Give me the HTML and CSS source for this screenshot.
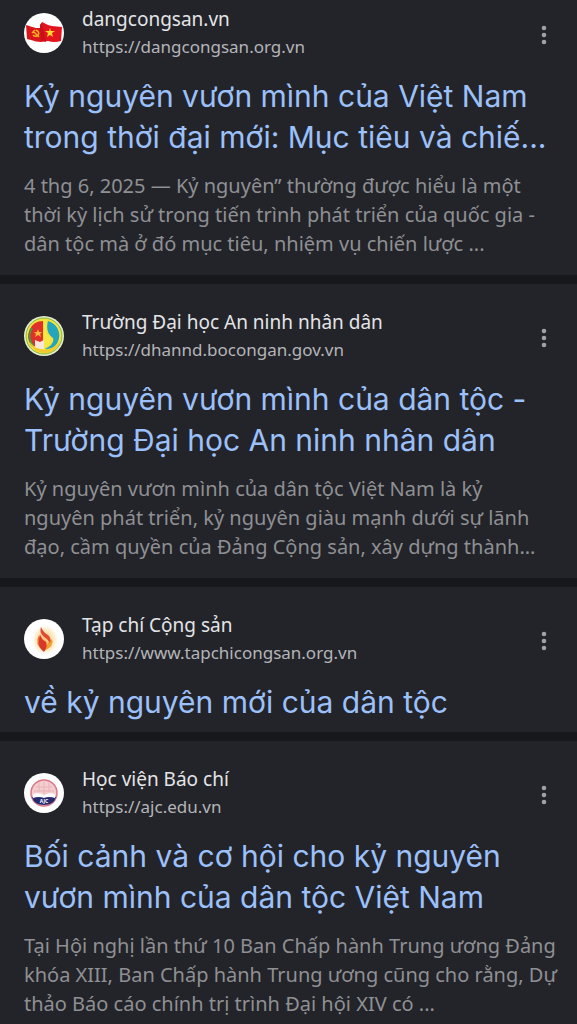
FILE: index.html
```html
<!DOCTYPE html>
<html lang="vi">
<head>
    <meta charset="UTF-8">
    <meta name="viewport" content="width=device-width, initial-scale=1">
    <title>kỷ nguyên vươn mình</title>
    <link rel="stylesheet" href="styles.css">
</head>
<body>
    <main class="results">
        <article class="result">
            <header class="source">
                <svg class="favicon" viewBox="0 0 40 40" aria-hidden="true">
                    <circle cx="20" cy="20" r="20" fill="#fff"/>
                    <path d="M2 12Q8 14 12 15L17 15V29Q12 29 7 27L3 26Z" fill="#d9151c"/>
                    <path d="M16 12L18 9Q23 12 28 13L38 14L37 28Q30 30 24 28L17 29Z" fill="#e3141d"/>
                    <path d="M16 12L17 27L22 29L18 10Z" fill="#c51119"/>
                    <path d="M26 15l1 3h4l-3 2 1 4-3-2-3 2 1-4-3-2h4z" fill="#ffd52e"/>
                    <path d="M12 17q5 3 1 6q-2 1-4-1M9 18l6 6M8 20l3-3" fill="none" stroke="#f8b020" stroke-width="1.5"/>
                </svg>
                <div class="site">
                    <span class="name">dangcongsan.vn</span>
                    <cite class="url">https://dangcongsan.org.vn</cite>
                </div>
                <button class="more" aria-label="Tùy chọn khác">
                    <svg viewBox="0 0 6 20" aria-hidden="true"><circle cx="3" cy="3" r="2.3"/><circle cx="3" cy="10" r="2.3"/><circle cx="3" cy="17" r="2.3"/></svg>
                </button>
            </header>
            <h3 class="title"><a href="#">Kỷ nguyên vươn mình của Việt Nam<br>trong thời đại mới: Mục tiêu và chiế...</a></h3>
            <p class="snippet">4 thg 6, 2025 — Kỷ nguyên” thường được hiểu là một<br>thời kỳ lịch sử trong tiến trình phát triển của quốc gia -<br>dân tộc mà ở đó mục tiêu, nhiệm vụ chiến lược ...</p>
        </article>

        <article class="result">
            <header class="source">
                <svg class="favicon" viewBox="0 0 40 40" aria-hidden="true">
                    <circle cx="20" cy="20" r="20" fill="#e8efcf"/>
                    <circle cx="20" cy="20" r="18" fill="#f3e23c" stroke="#7fb84d" stroke-width="1"/>
                    <path d="M19 5A15 15 0 0 0 8 30L19 31Z" fill="#e0302a"/>
                    <path d="M8 12A15 15 0 0 0 9 30" fill="none" stroke="#3f9a4b" stroke-width="2"/>
                    <path d="M24 5A15 15 0 0 1 31 30Q26 34 21 33Q31 28 29 22Q21 17 24 5Z" fill="#23a6bd"/>
                    <path d="M20 4h2v13l4 4q2 7-4 10h-2z" fill="#f7e747"/>
                    <path d="M5 25Q10 38 22 37Q33 35 36 25Q29 34 20 34Q11 33 5 25Z" fill="#f2c92e"/>
                    <path d="M14 13l1 3h3l-2 2 1 3-3-2-3 2 1-3-2-2h3z" fill="#ffb83b"/>
                    <path d="M11 24l5 2 4-2v9q-6 0-9-2z" fill="#f7e6dc"/>
                </svg>
                <div class="site">
                    <span class="name">Trường Đại học An ninh nhân dân</span>
                    <cite class="url">https://dhannd.bocongan.gov.vn</cite>
                </div>
                <button class="more" aria-label="Tùy chọn khác">
                    <svg viewBox="0 0 6 20" aria-hidden="true"><circle cx="3" cy="3" r="2.3"/><circle cx="3" cy="10" r="2.3"/><circle cx="3" cy="17" r="2.3"/></svg>
                </button>
            </header>
            <h3 class="title"><a href="#">Kỷ nguyên vươn mình của dân tộc -<br>Trường Đại học An ninh nhân dân</a></h3>
            <p class="snippet">Kỷ nguyên vươn mình của dân tộc Việt Nam là kỷ<br>nguyên phát triển, kỷ nguyên giàu mạnh dưới sự lãnh<br>đạo, cầm quyền của Đảng Cộng sản, xây dựng thành...</p>
        </article>

        <article class="result">
            <header class="source">
                <svg class="favicon" viewBox="0 0 40 40" aria-hidden="true">
                    <defs>
                        <radialGradient id="glow">
                            <stop offset="0" stop-color="#f9b04a"/>
                            <stop offset="0.5" stop-color="#fde0a8"/>
                            <stop offset="1" stop-color="#fff"/>
                        </radialGradient>
                    </defs>
                    <circle cx="20" cy="20" r="20" fill="#fff"/>
                    <ellipse cx="21" cy="21" rx="13" ry="15" fill="url(#glow)"/>
                    <path d="M15 16Q10 25 19 32Q19 26 15 16Z" fill="#e9762c"/>
                    <path d="M28 20Q31 27 20 32Q21 26 28 20Z" fill="#f3a12e"/>
                    <path d="M16 15Q17 20 22 23Q24 27 20 33Q14 28 15 22Z" fill="#d8372b"/>
                    <path d="M17 8Q19 13 24 16Q28 20 26 24Q24 20 19 17Q15 13 17 8Z" fill="#e04a36"/>
                    <path d="M17 16Q19 20 24 22" fill="none" stroke="#fbd5a5" stroke-width="1"/>
                </svg>
                <div class="site">
                    <span class="name">Tạp chí Cộng sản</span>
                    <cite class="url">https://www.tapchicongsan.org.vn</cite>
                </div>
                <button class="more" aria-label="Tùy chọn khác">
                    <svg viewBox="0 0 6 20" aria-hidden="true"><circle cx="3" cy="3" r="2.3"/><circle cx="3" cy="10" r="2.3"/><circle cx="3" cy="17" r="2.3"/></svg>
                </button>
            </header>
            <h3 class="title"><a href="#">về kỷ nguyên mới của dân tộc</a></h3>
        </article>

        <article class="result">
            <header class="source">
                <svg class="favicon" viewBox="0 0 40 40" aria-hidden="true">
                    <circle cx="20" cy="20" r="20" fill="#fff"/>
                    <circle cx="20" cy="20" r="13" fill="#f3cdd0" stroke="#d97783" stroke-width="1.5"/>
                    <path d="M8 24h24Q30 32 20 32Q10 32 8 24Z" fill="#252b6e"/>
                    <path d="M9 21Q15 19 20 22Q25 19 31 21V25Q25 23 20 25Q15 23 9 25Z" fill="#fff"/>
                    <path d="M10 18h20M12 14h16M20 9v12M15 10v9M25 10v9" stroke="#e9b3b8" stroke-width="1"/>
                    <text class="crest" x="20" y="30" text-anchor="middle">AJC</text>
                </svg>
                <div class="site">
                    <span class="name">Học viện Báo chí</span>
                    <cite class="url">https://ajc.edu.vn</cite>
                </div>
                <button class="more" aria-label="Tùy chọn khác">
                    <svg viewBox="0 0 6 20" aria-hidden="true"><circle cx="3" cy="3" r="2.3"/><circle cx="3" cy="10" r="2.3"/><circle cx="3" cy="17" r="2.3"/></svg>
                </button>
            </header>
            <h3 class="title"><a href="#">Bối cảnh và cơ hội cho kỷ nguyên<br>vươn mình của dân tộc Việt Nam</a></h3>
            <p class="snippet">Tại Hội nghị lần thứ 10 Ban Chấp hành Trung ương Đảng<br>khóa XIII, Ban Chấp hành Trung ương cũng cho rằng, Dự<br>thảo Báo cáo chính trị trình Đại hội XIV có ...</p>
        </article>
    </main>
</body>
</html>
```
FILE: styles.css
```css
body {
    margin: 0;
    background-color: #17181c;
    color: #e3e4e8;
    font-family: "Noto Sans", sans-serif;
}

.results {
    display: flex;
    flex-direction: column;
    gap: 9px;
}

.result {
    padding: 25px 24px 9px;
    background-color: #232429;
}

.result:first-child {
    padding-top: 6px;
}

.result:last-child {
    padding-bottom: 0;
}

.source {
    display: flex;
    align-items: center;
    gap: 18px;
}

.favicon {
    width: 40px;
    height: 40px;
    flex-shrink: 0;
}

.crest {
    fill: #fff;
    font-size: 5px;
    font-weight: bold;
}

.site {
    display: flex;
    flex-direction: column;
    flex: 1;
    line-height: 27px;
}

.name {
    font-size: 19px;
}

.url {
    color: #b4b5b9;
    font-size: 17px;
    font-style: normal;
}

.more {
    display: flex;
    padding: 10px 6px 6px;
    border: none;
    background: none;
    cursor: pointer;
}

.more svg {
    width: 6px;
    height: 20px;
    fill: #a0a1a5;
}

.title {
    margin: 16px 0 0;
    font-family: Inter, sans-serif;
    font-size: 30px;
    font-weight: normal;
    line-height: 41px;
    white-space: nowrap;
}

.title a {
    color: #9cc0fa;
    text-decoration: none;
}

.snippet {
    margin: 13px 0 8px;
    color: #8f9094;
    font-size: 20px;
    line-height: 29px;
    white-space: nowrap;
}
```
